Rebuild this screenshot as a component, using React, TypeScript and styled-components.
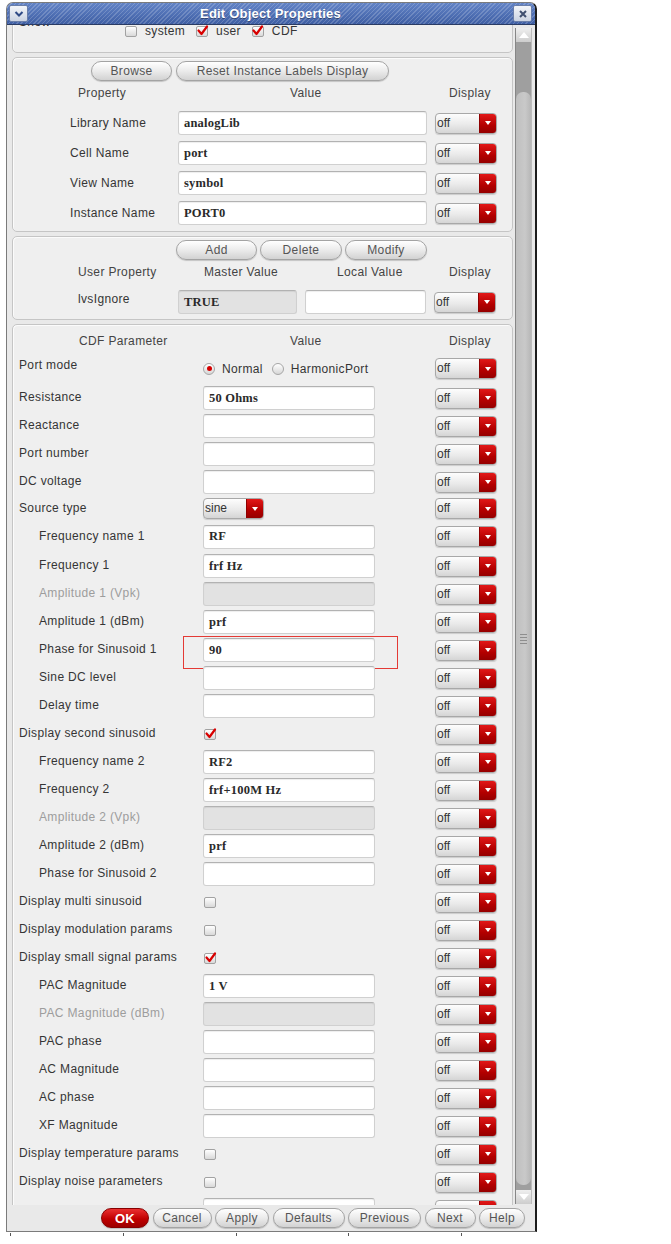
import React from 'react';
import styled, { createGlobalStyle } from 'styled-components';

const GlobalStyle = createGlobalStyle`
  html, body {
    margin: 0;
    padding: 0;
    background: #ffffff;
  }
  body {
    font-family: "Liberation Sans", Arial, sans-serif;
  }
`;

type CdfRowDef = {
  kind: 'text' | 'check' | 'radio' | 'select' | 'blank';
  label: string;
  value?: string;
  checked?: boolean;
  indent?: boolean;
  disabled?: boolean;
  highlight?: boolean;
  h?: number;
};

const cdfRows: CdfRowDef[] = [
  { kind: 'radio', label: 'Port mode', h: 31 },
  { kind: 'text', label: 'Resistance', value: '50 Ohms' },
  { kind: 'text', label: 'Reactance' },
  { kind: 'text', label: 'Port number' },
  { kind: 'text', label: 'DC voltage' },
  { kind: 'select', label: 'Source type', value: 'sine', h: 25 },
  { kind: 'text', label: 'Frequency name 1', value: 'RF', indent: true, h: 31 },
  { kind: 'text', label: 'Frequency 1', value: 'frf Hz', indent: true },
  { kind: 'text', label: 'Amplitude 1 (Vpk)', indent: true, disabled: true },
  { kind: 'text', label: 'Amplitude 1 (dBm)', value: 'prf', indent: true },
  { kind: 'text', label: 'Phase for Sinusoid 1', value: '90', indent: true, highlight: true },
  { kind: 'text', label: 'Sine DC level', indent: true },
  { kind: 'text', label: 'Delay time', indent: true },
  { kind: 'check', label: 'Display second sinusoid', checked: true },
  { kind: 'text', label: 'Frequency name 2', value: 'RF2', indent: true },
  { kind: 'text', label: 'Frequency 2', value: 'frf+100M Hz', indent: true },
  { kind: 'text', label: 'Amplitude 2 (Vpk)', indent: true, disabled: true },
  { kind: 'text', label: 'Amplitude 2 (dBm)', value: 'prf', indent: true },
  { kind: 'text', label: 'Phase for Sinusoid 2', indent: true },
  { kind: 'check', label: 'Display multi sinusoid', checked: false },
  { kind: 'check', label: 'Display modulation params', checked: false },
  { kind: 'check', label: 'Display small signal params', checked: true },
  { kind: 'text', label: 'PAC Magnitude', value: '1 V', indent: true },
  { kind: 'text', label: 'PAC Magnitude (dBm)', indent: true, disabled: true },
  { kind: 'text', label: 'PAC phase', indent: true },
  { kind: 'text', label: 'AC Magnitude', indent: true },
  { kind: 'text', label: 'AC phase', indent: true },
  { kind: 'text', label: 'XF Magnitude', indent: true },
  { kind: 'check', label: 'Display temperature params', checked: false },
  { kind: 'check', label: 'Display noise parameters', checked: false },
  { kind: 'text', label: '' },
];

const instanceRows = [
  { label: 'Library Name', value: 'analogLib' },
  { label: 'Cell Name', value: 'port' },
  { label: 'View Name', value: 'symbol' },
  { label: 'Instance Name', value: 'PORT0' },
];

const footerButtons = [
  { label: 'Cancel', w: 59 },
  { label: 'Apply', w: 54 },
  { label: 'Defaults', w: 72 },
  { label: 'Previous', w: 73 },
  { label: 'Next', w: 51 },
  { label: 'Help', w: 46 },
];

const Window = styled.div`
  box-sizing: border-box;
  margin: 2px 0 0 6px;
  width: 531px;
  height: 1230px;
  display: flex;
  flex-direction: column;
  background: #e9e9e9;
  border: 1px solid #7b7b7b;
  border-right: 2px solid #1c1c1c;
  border-radius: 7px 7px 0 0;
  overflow: hidden;
  font-family: "Liberation Sans", Arial, sans-serif;
  font-size: 12px;
  letter-spacing: 0.35px;
  color: #353535;
`;

const TitleBar = styled.div`
  flex: none;
  height: 21px;
  display: flex;
  align-items: center;
  padding: 0 3px 0 2px;
  border-bottom: 1px solid #2a3b63;
  background:
    repeating-linear-gradient(135deg, rgba(255, 255, 255, 0.18) 0 1px, transparent 1px 3px),
    linear-gradient(#6283c6, #3f5fa4);
`;

const TitleButton = styled.div`
  box-sizing: border-box;
  width: 19px;
  height: 17px;
  display: flex;
  align-items: center;
  justify-content: center;
  border: 1px solid #6a7ea9;
  border-radius: 2px;
  background: linear-gradient(#f3f5f9, #cbd3e2);
`;

const Title = styled.div`
  flex: 1;
  text-align: center;
  color: #ffffff;
  font-weight: bold;
  font-size: 13px;
  letter-spacing: 0.2px;
  text-shadow: 0 1px 0 rgba(0, 0, 0, 0.35);
`;

const Main = styled.div`
  flex: none;
  height: 1180px;
  display: flex;
`;

const ScrollArea = styled.div`
  flex: 1;
  overflow: hidden;
  padding: 0 2px 0 5px;
`;

const ScrollContent = styled.div`
  display: flex;
  flex-direction: column;
  gap: 4px;
  margin-top: -17px;
`;

const Panel = styled.div<{ $h?: number }>`
  box-sizing: border-box;
  ${p => (p.$h ? `height: ${p.$h}px;` : '')}
  background: #efefef;
  border: 1px solid #c5c5c5;
  border-radius: 5px;
  box-shadow: inset 1px 1px 0 #fbfbfb;
`;

const ShowPanel = styled(Panel)`
  display: flex;
  align-items: flex-start;
  padding: 6px 0 0 6px;
`;

const ShowLabel = styled.span`
  line-height: 14px;
  width: 106px;
`;

const CheckGroup = styled.div`
  display: flex;
  align-items: center;
  margin-top: 9px;
  gap: 11px;
`;

const CheckOption = styled.label`
  display: flex;
  align-items: center;
  gap: 8px;
  line-height: 14px;
`;

const CheckBox = styled.span`
  box-sizing: border-box;
  width: 12px;
  height: 11px;
  display: flex;
  align-items: center;
  justify-content: center;
  border: 1px solid #a2a2a2;
  border-radius: 2px;
  background: linear-gradient(#ffffff, #d9d9d9);
`;

const Radio = styled.span<{ $on?: boolean }>`
  box-sizing: border-box;
  width: 12px;
  height: 12px;
  display: flex;
  align-items: center;
  justify-content: center;
  border: 1px solid #a6a6a6;
  border-radius: 50%;
  background: linear-gradient(#ffffff, #d6d6d6);

  &::after {
    content: '';
    width: 5px;
    height: 5px;
    border-radius: 50%;
    background: ${p => (p.$on ? '#d40000' : 'transparent')};
  }
`;

const RadioGroup = styled.div`
  display: flex;
  align-items: center;
  gap: 9px;
`;

const RadioOption = styled.label`
  display: flex;
  align-items: center;
  gap: 7px;
`;

const ButtonRow = styled.div<{ $pad: number; $gap: number }>`
  display: flex;
  gap: ${p => p.$gap}px;
  padding-left: ${p => p.$pad}px;
  margin-top: 3px;
`;

const PillButton = styled.div<{ $w: number; $primary?: boolean }>`
  box-sizing: border-box;
  width: ${p => p.$w}px;
  height: 20px;
  display: flex;
  align-items: center;
  justify-content: center;
  border: 1px solid ${p => (p.$primary ? '#870000' : '#a3a3a3')};
  border-radius: 10px;
  background: ${p =>
    p.$primary
      ? 'linear-gradient(#ea3030, #c10000 55%, #9c0000)'
      : 'linear-gradient(#ffffff, #ebebeb 50%, #d2d2d2)'};
  box-shadow: 0 1px 1px rgba(0, 0, 0, 0.18);
  color: ${p => (p.$primary ? '#ffffff' : '#555555')};
  font-weight: ${p => (p.$primary ? 'bold' : 'normal')};
  font-size: ${p => (p.$primary ? 13 : 12)}px;
  white-space: nowrap;
`;

const InstanceGrid = styled.div<{ $cols: string; $h: number; $mt: number }>`
  display: grid;
  grid-template-columns: ${p => p.$cols};
  column-gap: 8px;
  align-items: center;
  height: ${p => p.$h}px;
  margin-top: ${p => p.$mt}px;
`;

const HeaderCell = styled.span<{ $pad: number }>`
  padding-left: ${p => p.$pad}px;
  color: #444;
  white-space: nowrap;
  line-height: 16px;
`;

const FieldLabel = styled.span<{ $pad: number; $up?: number }>`
  padding-left: ${p => p.$pad}px;
  margin-top: ${p => -(p.$up ?? 0)}px;
  white-space: nowrap;
`;

const TextBox = styled.div<{ $w: number; $disabled?: boolean }>`
  box-sizing: border-box;
  width: ${p => p.$w}px;
  height: 24px;
  display: flex;
  align-items: center;
  padding: 0 5px;
  background: ${p => (p.$disabled ? '#e2e2e2' : '#ffffff')};
  border: 1px solid #d0d0d0;
  border-top-color: #b2b2b2;
  border-radius: 3px;
  box-shadow: inset 0 1px 1px rgba(0, 0, 0, 0.07);
  font-family: "Liberation Serif", "Times New Roman", serif;
  font-weight: bold;
  font-size: 12.5px;
  letter-spacing: 0.2px;
  color: #2a2a2a;
  white-space: nowrap;
`;

const Select = styled.div<{ $w: number }>`
  box-sizing: border-box;
  width: ${p => p.$w}px;
  height: 21px;
  display: flex;
  border: 1px solid #a8a8a8;
  border-radius: 4px;
  overflow: hidden;
  background: linear-gradient(#fdfdfd, #eaeaea 55%, #d5d5d5);
  box-shadow: 0 1px 1px rgba(0, 0, 0, 0.15);
`;

const SelectText = styled.span`
  flex: 1;
  padding-left: 1px;
  line-height: 19px;
  color: #333;
  letter-spacing: 0;
`;

const SelectArrow = styled.span`
  width: 16px;
  display: flex;
  align-items: center;
  justify-content: center;
  border-left: 1px solid #8e0000;
  background: linear-gradient(#e21818, #b30000 60%, #950000);

  &::after {
    content: '';
    border-left: 3px solid transparent;
    border-right: 3px solid transparent;
    border-top: 4px solid #ffffff;
  }
`;

const CdfRow = styled.div<{ $h: number }>`
  position: relative;
  display: grid;
  grid-template-columns: 182px 224px 62px;
  column-gap: 8px;
  align-items: center;
  height: ${p => p.$h}px;
`;

const CdfLabel = styled.span<{ $indent?: boolean; $disabled?: boolean; $up: number }>`
  padding-left: ${p => (p.$indent ? 26 : 6)}px;
  color: ${p => (p.$disabled ? '#9d9d9d' : '#353535')};
  white-space: nowrap;
  margin-top: ${p => -p.$up}px;
`;

const CdfHeader = styled.div`
  display: grid;
  grid-template-columns: 182px 224px 62px;
  column-gap: 8px;
  height: 16px;
  margin-bottom: 4px;
`;

const CheckCell = styled.div`
  padding-left: 1px;
  display: flex;
`;

const Highlight = styled.div`
  position: absolute;
  left: 170px;
  top: 0;
  width: 215px;
  height: 33px;
  box-sizing: border-box;
  border: 1.5px solid #e43a35;
  pointer-events: none;
`;

const CdfPanel = styled(Panel)`
  padding-top: 8px;
  padding-bottom: 20px;
`;

const Scrollbar = styled.div`
  flex: none;
  width: 17px;
  margin: 3px 3px 1px 0;
  display: flex;
  flex-direction: column;
  box-sizing: border-box;
  background: #9f9f9f;
  border-left: 1px solid #868686;
  border-right: 1px solid #bcbcbc;
`;

const ScrollArrow = styled.div<{ $down?: boolean }>`
  flex: none;
  height: 14px;
  display: flex;
  align-items: center;
  justify-content: center;
  background: linear-gradient(#efefef, #cdcdcd);

  &::after {
    content: '';
    border-left: 5px solid transparent;
    border-right: 5px solid transparent;
    ${p => (p.$down ? 'border-top' : 'border-bottom')}: 6px solid #ffffff;
  }
`;

const ScrollTrack = styled.div`
  flex: 1;
  display: flex;
  flex-direction: column;
  padding: 50px 0 5px;
`;

const Thumb = styled.div`
  flex: 1;
  display: flex;
  flex-direction: column;
  align-items: center;
  justify-content: center;
  gap: 2px;
  border-radius: 7px;
  background: linear-gradient(90deg, #bfbfbf, #c9c9c9 60%, #b7b7b7);
`;

const Grip = styled.span`
  width: 7px;
  height: 1px;
  background: #8e8e8e;
`;

const Footer = styled.div`
  flex: none;
  height: 26px;
  box-sizing: border-box;
  display: flex;
  justify-content: flex-end;
  gap: 3.5px;
  padding: 3px 10px 0 0;
`;

const Ticks = styled.div`
  display: flex;
  gap: 111.75px;
  padding: 1px 0 0 10px;
`;

const Tick = styled.span`
  width: 1px;
  height: 3px;
  background: #555;
`;

const CheckMark = () => (
  <svg width="11" height="10" viewBox="0 0 11 10" style={{ overflow: 'visible' }}>
    <path d="M1.5 4.5 L4.5 8 L10 0.5" fill="none" stroke="#d80000" strokeWidth="2.2" strokeLinecap="round" strokeLinejoin="round" />
  </svg>
);

const Check = ({ on }: { on?: boolean }) => <CheckBox>{on && <CheckMark />}</CheckBox>;

const DisplaySelect = ({ text = 'off', w = 62 }: { text?: string; w?: number }) => (
  <Select $w={w}>
    <SelectText>{text}</SelectText>
    <SelectArrow />
  </Select>
);

const renderValue = (row: CdfRowDef) => {
  switch (row.kind) {
    case 'radio':
      return (
        <RadioGroup>
          <RadioOption>
            <Radio $on />
            Normal
          </RadioOption>
          <RadioOption>
            <Radio />
            HarmonicPort
          </RadioOption>
        </RadioGroup>
      );
    case 'select':
      return <DisplaySelect text={row.value} w={61} />;
    case 'check':
      return (
        <CheckCell>
          <Check on={row.checked} />
        </CheckCell>
      );
    default:
      return (
        <TextBox $w={172} $disabled={row.disabled}>
          {row.value}
        </TextBox>
      );
  }
};

const App = () => {
  return (
    <>
      <GlobalStyle />
      <Window>
        <TitleBar>
          <TitleButton>
            <svg width="12" height="10" viewBox="0 0 12 10">
              <path d="M2.5 3 L6 6.5 L9.5 3" fill="none" stroke="#2f4a86" strokeWidth="2" />
            </svg>
          </TitleButton>
          <Title>Edit Object Properties</Title>
          <TitleButton>
            <svg width="10" height="10" viewBox="0 0 10 10">
              <path d="M2 2 L8 8 M8 2 L2 8" fill="none" stroke="#3f4f70" strokeWidth="2" />
            </svg>
          </TitleButton>
        </TitleBar>

        <Main>
          <ScrollArea>
            <ScrollContent>
              <ShowPanel $h={45}>
                <ShowLabel>Show</ShowLabel>
                <CheckGroup>
                  <CheckOption>
                    <Check />
                    system
                  </CheckOption>
                  <CheckOption>
                    <Check on />
                    user
                  </CheckOption>
                  <CheckOption>
                    <Check on />
                    CDF
                  </CheckOption>
                </CheckGroup>
              </ShowPanel>

              <Panel $h={175}>
                <ButtonRow $pad={78} $gap={4}>
                  <PillButton $w={81}>Browse</PillButton>
                  <PillButton $w={213}>Reset Instance Labels Display</PillButton>
                </ButtonRow>
                <InstanceGrid $cols="157px 249px 62px" $h={16} $mt={4}>
                  <HeaderCell $pad={65}>Property</HeaderCell>
                  <HeaderCell $pad={112}>Value</HeaderCell>
                  <HeaderCell $pad={14}>Display</HeaderCell>
                </InstanceGrid>
                {instanceRows.map((r, i) => (
                  <InstanceGrid key={r.label} $cols="157px 249px 62px" $h={24} $mt={i === 0 ? 10 : 6}>
                    <FieldLabel $pad={57}>{r.label}</FieldLabel>
                    <TextBox $w={249}>{r.value}</TextBox>
                    <DisplaySelect />
                  </InstanceGrid>
                ))}
              </Panel>

              <Panel $h={84}>
                <ButtonRow $pad={163} $gap={3}>
                  <PillButton $w={81}>Add</PillButton>
                  <PillButton $w={82}>Delete</PillButton>
                  <PillButton $w={82}>Modify</PillButton>
                </ButtonRow>
                <InstanceGrid $cols="157px 119px 121px 62px" $h={16} $mt={4}>
                  <HeaderCell $pad={65}>User Property</HeaderCell>
                  <HeaderCell $pad={26}>Master Value</HeaderCell>
                  <HeaderCell $pad={32}>Local Value</HeaderCell>
                  <HeaderCell $pad={15}>Display</HeaderCell>
                </InstanceGrid>
                <InstanceGrid $cols="157px 119px 121px 62px" $h={24} $mt={10}>
                  <FieldLabel $pad={65} $up={6}>lvsIgnore</FieldLabel>
                  <TextBox $w={119} $disabled>
                    TRUE
                  </TextBox>
                  <TextBox $w={121} />
                  <DisplaySelect />
                </InstanceGrid>
              </Panel>

              <CdfPanel>
                <CdfHeader>
                  <HeaderCell $pad={66}>CDF Parameter</HeaderCell>
                  <HeaderCell $pad={87}>Value</HeaderCell>
                  <HeaderCell $pad={14}>Display</HeaderCell>
                </CdfHeader>
                {cdfRows.map((row, i) => (
                  <CdfRow key={i} $h={row.h ?? 28}>
                    <CdfLabel $indent={row.indent} $disabled={row.disabled} $up={row.kind === 'radio' ? 7 : 2}>
                      {row.label}
                    </CdfLabel>
                    {renderValue(row)}
                    <DisplaySelect />
                    {row.highlight && <Highlight />}
                  </CdfRow>
                ))}
              </CdfPanel>
            </ScrollContent>
          </ScrollArea>

          <Scrollbar>
            <ScrollArrow />
            <ScrollTrack>
              <Thumb>
                <Grip />
                <Grip />
                <Grip />
                <Grip />
              </Thumb>
            </ScrollTrack>
            <ScrollArrow $down />
          </Scrollbar>
        </Main>

        <Footer>
          <PillButton $w={48} $primary>
            OK
          </PillButton>
          {footerButtons.map(b => (
            <PillButton key={b.label} $w={b.w}>
              {b.label}
            </PillButton>
          ))}
        </Footer>
      </Window>
      <Ticks>
        {[0, 1, 2, 3, 4].map(i => (
          <Tick key={i} />
        ))}
      </Ticks>
    </>
  );
};

export default App;
